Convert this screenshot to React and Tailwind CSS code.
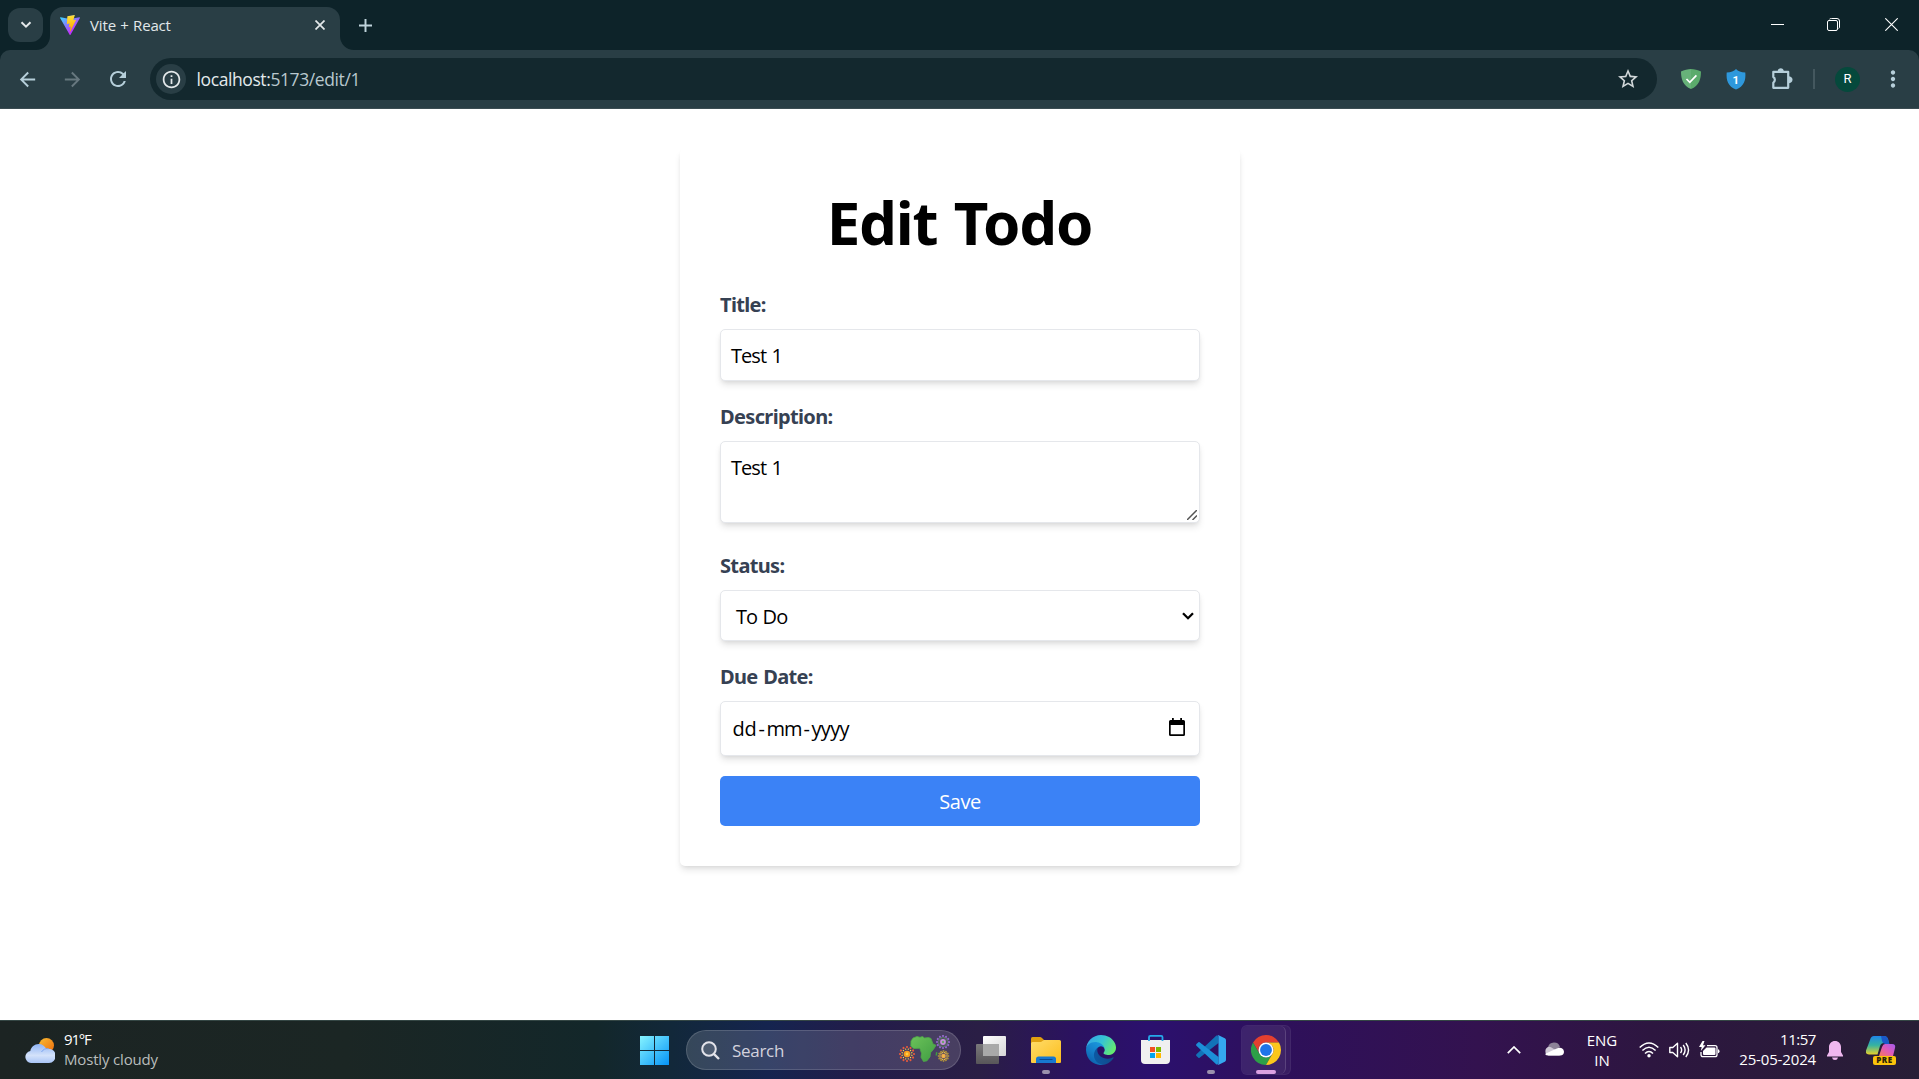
import React from "react";
import { MdArrowBack, MdArrowForward, MdRefresh, MdInfoOutline, MdStarBorder, MdMoreVert } from "react-icons/md";

function ViteLogo() {
  return (
    <svg viewBox="0 0 256 257" className="h-5 w-5">
      <defs>
        <linearGradient id="va" x1="-.8%" x2="57.6%" y1="7.7%" y2="78.4%"><stop offset="0%" stopColor="#41D1FF" /><stop offset="100%" stopColor="#BD34FE" /></linearGradient>
        <linearGradient id="vb" x1="43.4%" x2="50.3%" y1="2.2%" y2="89%"><stop offset="0%" stopColor="#FFEA83" /><stop offset="8.3%" stopColor="#FFDD35" /><stop offset="100%" stopColor="#FFA800" /></linearGradient>
      </defs>
      <path fill="url(#va)" d="M255.153 37.938L134.897 252.976c-2.483 4.44-8.862 4.466-11.382.048L.875 37.958c-2.746-4.814 1.371-10.646 6.827-9.67l120.385 21.517a6.537 6.537 0 0 0 2.322-.004l117.867-21.483c5.438-.991 9.574 4.796 6.877 9.62Z" />
      <path fill="url(#vb)" d="M185.432.063L96.44 17.501a3.268 3.268 0 0 0-2.634 3.014l-5.474 92.456a3.268 3.268 0 0 0 3.997 3.378l24.777-5.718c2.318-.535 4.413 1.507 3.936 3.838l-7.361 36.047c-.495 2.426 1.782 4.5 4.151 3.78l15.304-4.649c2.372-.72 4.652 1.36 4.15 3.788l-11.698 56.621c-.732 3.542 3.979 5.473 5.943 2.437l1.313-2.028l72.516-144.72c1.215-2.423-.88-5.186-3.54-4.672l-25.505 4.922c-2.396.462-4.435-1.77-3.759-4.114l16.646-57.705c.677-2.35-1.37-4.583-3.769-4.113Z" />
    </svg>
  );
}

function TabStrip() {
  return (
    <div className="flex h-[50px] bg-[#0d2329]">
      <div className="ml-2 mt-2 flex h-[34px] w-[35px] items-center justify-center rounded-xl bg-[#293e45]">
        <svg viewBox="0 0 12 8" className="h-2 w-3" fill="none" stroke="#e3e8ea" strokeWidth="2"><path d="M1.5 1.2 6 5.7l4.5-4.5" /></svg>
      </div>
      <div className="relative ml-[7px] mt-[7px] flex h-[43px] w-[290px] items-center rounded-t-[13px] bg-[#293e45] pl-[10px] pb-[7px]">
        <svg viewBox="0 0 14 14" className="absolute -left-[14px] bottom-0 h-[14px] w-[14px]"><path d="M14 0v14H0A14 14 0 0 0 14 0" fill="#293e45" /></svg>
        <svg viewBox="0 0 14 14" className="absolute -right-[14px] bottom-0 h-[14px] w-[14px]"><path d="M0 0v14h14A14 14 0 0 1 0 0" fill="#293e45" /></svg>
        <ViteLogo />
        <span className="ml-[10px] flex-1 text-[15px] leading-5 tracking-[-0.15px] [word-spacing:0.6px] text-[#e2e8ea]">Vite + React</span>
        <svg viewBox="0 0 10 10" className="mr-[15px] h-[10px] w-[10px]" stroke="#e3e8ea" strokeWidth="1.7"><path d="M.5.5l9 9M9.5.5l-9 9" /></svg>
      </div>
      <svg viewBox="0 0 12 12" className="ml-[19px] mt-[18.5px] h-[13px] w-[13px]" stroke="#c0d4dc" strokeWidth="1.8"><path d="M6 0v12M0 6h12" /></svg>
      <div className="flex-1" />
      <div className="flex h-[50px] w-[140px] items-start pt-[18px]">
        <svg viewBox="0 0 13 13" className="-ml-[8px] h-[13px] w-[13px]" stroke="#fff" strokeWidth="1"><path d="M0 6.5h13" /></svg>
        <svg viewBox="0 0 13 13" className="ml-[43px] h-[13px] w-[13px]" fill="none" stroke="#fff" strokeWidth="1"><rect x=".5" y="2.5" width="10" height="10" rx="1.5" /><path d="M2.5 1.2Q3 .5 4.5.5H10Q12.5.5 12.5 3v6q0 1-.8 1.5" /></svg>
        <svg viewBox="0 0 13 13" className="ml-[45px] h-[13px] w-[13px]" stroke="#fff" strokeWidth="1.1"><path d="M.3.3l12.4 12.4M12.7.3.3 12.7" /></svg>
      </div>
    </div>
  );
}

function Toolbar() {
  return (
    <div className="bg-[#0d2329]">
      <div className="flex h-[59px] items-center rounded-t-[10px] border-b border-[#3b4c52] bg-[#293e45]">
        <MdArrowBack className="ml-4 h-[23px] w-[23px] text-[#b6cfda]" />
        <MdArrowForward className="ml-[22px] h-[23px] w-[23px] text-[#67787f]" />
        <MdRefresh className="ml-[22px] h-6 w-6 text-[#b6cfda]" />
        <div className="ml-[20px] flex h-[42px] w-[1507px] items-center rounded-full bg-[#13282e] pl-[6px]">
          <div className="flex h-[30px] w-[30px] items-center justify-center rounded-full bg-[#293e45]"><MdInfoOutline className="h-[21px] w-[21px] text-[#e3e8ea]" /></div>
          <span className="ml-[10.5px] flex-1 text-[17.5px] tracking-[-0.4px] text-[#b9c8ce]"><span className="text-[#e3eaec]">localhost:</span>5173/edit/1</span>
          <MdStarBorder className="mr-[17.5px] h-6 w-6 text-[#d2d8da]" />
        </div>
        <svg viewBox="0 0 20 20" className="ml-[24px] h-5 w-5"><path d="M10 0C7 .2 3 1 0 2.5 0 10 2 17 10 20Z" fill="#67b279" /><path d="M10 0c3 .2 7 1 10 2.5C20 10 18 17 10 20Z" fill="#5bab6c" /><path d="M5.5 10l3.3 3.3 6.6-7" fill="none" stroke="#fff" strokeWidth="1.7" /></svg>
        <svg viewBox="0 0 20 21" className="ml-[25px] h-[21px] w-5"><path d="M10 0C8 2.2 5 3.2.7 3.5 0 11 2 17.500 10 20.500 18 17.500 20 11 19.300 3.500 15 3.200 12 2.200 10 0Z" fill="#2e98dc" /><text x="9.8" y="14.500" textAnchor="middle" fill="#fff" fontSize="11.500" fontWeight="700" fontFamily="Roboto">1</text></svg>
        <svg viewBox="0 0 22 21" className="-mt-[2px] ml-[25px] h-[21px] w-[22px]"><path d="M2.300 3.800h14.900v5.400 5 5.600H2.300v-5.200a3.300 3.300 0 0 0 0-5.600Z" fill="none" stroke="#b6cfda" strokeWidth="2.200" strokeLinejoin="round" /><path d="M18 8.200q3.500.6 3.500 3.500T18 15.200z" fill="#b6cfda" /><path d="M6.500 3.500Q7 .3 9.700.3t3.200 3.200z" fill="#b6cfda" /></svg>
        <div className="ml-[20px] h-5 w-[2px] bg-[#44585f]" />
        <div className="ml-[20px] flex h-[25px] w-[25px] items-center justify-center rounded-full bg-[#05493c] font-[Roboto] text-[13px] text-white">R</div>
        <MdMoreVert className="ml-[20px] h-[26px] w-[26px] text-[#b6cfda]" />
      </div>
    </div>
  );
}

function Field({ label, children, className }) {
  return (
    <div className={className}>
      <div className="mb-[10px] h-[30px] pl-[0.5px] pt-px font-['Noto_Sans'] text-[20px] font-bold leading-[30px] tracking-[-0.65px] text-gray-700 [word-spacing:1px]">{label}</div>
      {children}
    </div>
  );
}

const box = "flex w-full rounded-[5px] border border-[#e5e7eb] bg-white text-[20px] leading-[30px] tracking-[-0.95px] [word-spacing:1.2px] text-black shadow-[0_5px_7.5px_-1px_rgba(0,0,0,0.1),0_2.5px_5px_-2.5px_rgba(0,0,0,0.1)]";

function EditForm() {
  return (
    <div className="flex h-[911px] items-start justify-center bg-white pt-10">
      <div className="h-[717px] w-[560px] rounded-[5px] px-10 pt-[42.5px] shadow-[0_5px_7.5px_-1px_rgba(0,0,0,0.1),0_2.5px_5px_-2.5px_rgba(0,0,0,0.1)]">
        <h1 className="mb-[37.5px] text-center font-['Noto_Sans'] text-[60px] font-bold leading-[61px] h-[60px] tracking-[-1.2px] [word-spacing:2px] text-black">Edit Todo</h1>
        <Field label="Title:" className="h-28"><div className={box + " h-[52px] items-center pt-[2px] px-[10.5px]"}>Test 1</div></Field>
        <Field label="Description:" className="h-[149px]">
          <div className={box + " relative h-[82px] px-[10.5px] pt-[11px]"}>Test 1
            <svg viewBox="0 0 10 10" className="absolute bottom-[2px] right-[2px] h-[10px] w-[10px]" stroke="#555" strokeWidth="1.5"><path d="M0 10 10 0M5.500 10 10 5.500" /></svg>
          </div>
        </Field>
        <Field label="Status:" className="h-[111px]">
          <div className={box + " h-[51px] items-center justify-between pl-[15.5px] pr-[5px]"}><span className="pt-[2px]">To Do</span>
            <svg viewBox="0 0 12 8" className="h-2 w-3" fill="none" stroke="#000" strokeWidth="2.300"><path d="M1 1.200 6 6.200l5-5" /></svg>
          </div>
        </Field>
        <Field label="Due Date:" className="h-[115px]">
          <div className={box + " h-[55px] items-center pl-[12px] pr-[14px]"}>
            <span className="w-[26px] tracking-[-0.300px]">dd</span><span className="w-[8px]">-</span><span className="w-[37px] tracking-[-1px]">mm</span><span className="w-[8px]">-</span><span className="flex-1 tracking-[-0.700px]">yyyy</span>
            <svg viewBox="0 0 16 18" className="-mt-[3px] h-[18px] w-4"><path d="M3 0h1.800v2h6.400V0H13v2h1.500Q16 2 16 3.500v13q0 1.500-1.500 1.500h-13Q0 18 0 16.500v-13Q0 2 1.500 2H3Zm-1.300 7v9.300h12.600V7Z" fillRule="evenodd" /></svg>
          </div>
        </Field>
        <button className="h-[50px] w-full rounded-[5px] bg-[#3b82f6] pl-px pt-[2px] text-[20px] leading-[30px] tracking-[-0.500px] text-white">Save</button>
      </div>
    </div>
  );
}

function WeatherIcon() {
  return (
    <svg viewBox="0 0 30 25" className="h-[25px] w-[30px]">
      <defs>
        <linearGradient id="sun" x1="0" x2="1" y1="0" y2="1"><stop stopColor="#f9bd32" /><stop offset="1" stopColor="#ec6a0c" /></linearGradient>
        <linearGradient id="cl" x1="0" x2="0" y1="0" y2="1"><stop stopColor="#8fb4f5" /><stop offset=".6" stopColor="#d4e2fa" /><stop offset="1" stopColor="#a9c5f6" /></linearGradient>
      </defs>
      <circle cx="21.500" cy="7.500" r="7.500" fill="url(#sun)" />
      <path d="M6 25a6 6 0 0 1-.7-11.900C6 9 9.500 6 13.700 6c3.600 0 6.200 2 7.600 5a7 7 0 0 1 2-.3A6.900 7 0 0 1 24 25Z" fill="url(#cl)" />
      <path d="M16.500 14a7 7 0 0 1 7-3.300" fill="none" stroke="#7da6f0" strokeWidth="1" />
    </svg>
  );
}

const rays = [0, 30, 60, 90, 120, 150, 180, 210, 240, 270, 300, 330];
function Burst({ x, y, r, outer, mid, core }) {
  return (
    <g transform={`translate(${x} ${y})`}>
      {rays.map((a) => <circle key={a} cx={r} cy="0" r="1.100" fill={outer} transform={`rotate(${a})`} />)}
      {rays.map((a) => <circle key={a} cx={r * 0.72} cy="0" r=".7" fill={mid} transform={`rotate(${a + 15})`} />)}
      <circle r={r * 0.48} fill={core} />
      <circle r={r * 0.2} fill={mid} />
    </g>
  );
}

function SearchPill() {
  return (
    <div className="flex h-10 w-[275px] items-center rounded-full border border-white/15 bg-white/15 pl-[14px]">
      <svg viewBox="0 0 19 19" className="h-[19px] w-[19px]" fill="none" stroke="#e3e3ea" strokeWidth="2"><circle cx="8" cy="8" r="6.800" fill="#fff" fillOpacity=".12" /><path d="M12.800 12.800 18 18" strokeWidth="2.400" /></svg>
      <span className="ml-3 flex-1 pt-px text-[17px] tracking-[-0.300px] text-[#d3d2dd]">Search</span>
      <svg viewBox="0 0 52 30" className="mr-[10px] h-[30px] w-[52px]">
        <defs><linearGradient id="af" x1="0" x2="1" y1="0" y2="1"><stop stopColor="#6cc25a" /><stop offset="1" stopColor="#3f9d42" /></linearGradient></defs>
        <path d="M13 6l2-3 4-1.500 3 .8 2.500-.8 2 1.500 4-.5 2.500 1 2 5.500 3 1.300-2.500 4-3 3.500-.5 4-3 4-3.500.7-2.500-4.200.5-4-1.700-5-6 .2-3-2.500Z" fill="url(#af)" stroke="#4ea848" strokeWidth=".8" strokeLinejoin="round" />
        <path d="M38 17l1.500.5-.5 3-1.500 0Z" fill="#3f9d42" />
        <Burst x={9} y={19} r={7} outer="#e85a3c" mid="#f8d24a" core="#f79a1c" />
        <Burst x={45} y={7} r={6} outer="#9068c8" mid="#6aa868" core="#c793dd" />
        <Burst x={45.500} y={21} r={4.800} outer="#a88a3e" mid="#e8bf4a" core="#f0a848" />
      </svg>
    </div>
  );
}

function EdgeIcon() {
  return (
    <svg viewBox="0 0 256 256" className="h-[30px] w-[30px]">
      <defs>
        <linearGradient id="e1" x1="0" x2="1"><stop stopColor="#0c59a4" /><stop offset="1" stopColor="#114a8b" /></linearGradient>
        <linearGradient id="e2" x1=".8" x2=".2" y1="0" y2="1"><stop stopColor="#1b9de2" /><stop offset=".5" stopColor="#1580ca" /><stop offset="1" stopColor="#0c5ba8" /></linearGradient>
        <linearGradient id="e3" x1="0" x2="1" y1=".2" y2=".6"><stop stopColor="#35a3e8" /><stop offset=".5" stopColor="#36c3d4" /><stop offset="1" stopColor="#66eb6e" /></linearGradient>
      </defs>
      <path fill="url(#e1)" d="M231 190.500c-3.400 1.800-6.900 3.400-10.500 4.700a101.500 101.500 0 0 1-35.900 6.500c-47.300 0-88.500-32.500-88.500-74.300 0-11.700 6.400-22 15.400-27.400C68.700 101.800 57.700 146.400 57.700 172.500c0 73.800 68 81.300 82.700 81.300 7.900 0 19.800-2.300 27-4.600l1.300-.4a128.300 128.300 0 0 0 66.600-52.800 4 4 0 0 0-4.300-5.500z" />
      <path fill="url(#e2)" d="M105.700 241.400a79.200 79.200 0 0 1-22.700-21.300A80.700 80.700 0 0 1 112.500 100c3.100-1.500 8.500-4.100 15.600-4a32.400 32.400 0 0 1 25.700 13 31.900 31.900 0 0 1 6.300 18.700c0-.2 24.500-79.600-80-79.600C36.200 48.100 0 89.800 0 126.400c-.2 19.300 4 38.500 12.200 56a128 128 0 0 0 156.400 67 75.500 75.500 0 0 1-62.800-8z" />
      <path fill="url(#e3)" d="M152.300 148.900c-.8 1-3.300 2.500-3.300 5.700 0 2.600 1.700 5.100 4.700 7.300 14.400 10 41.500 8.700 41.600 8.700 10.700 0 21.100-2.900 30.300-8.300A61.400 61.400 0 0 0 256 109.400c.3-22.400-8-37.300-11.300-43.900C223.500 23.900 177.700 0 128 0 58 0 1 56.200 0 126.200c.5-36.500 36.800-66 80-66 3.500 0 23.500.3 42 10.100 16.300 8.600 24.900 18.900 30.800 29.200 6.200 10.700 7.300 24.100 7.300 29.500 0 5.300-2.700 13.300-7.800 19.900z" />
    </svg>
  );
}

function AppIcons() {
  return (
    <>
      <svg viewBox="0 0 30 28" className="ml-[15px] h-7 w-[30px]">
        <defs><linearGradient id="tv" x1="0" y1="0" x2="1" y2="1"><stop stopColor="#fff" /><stop offset="1" stopColor="#d6d6d6" /></linearGradient><linearGradient id="tw" x1="0" y1="0" x2="0" y2="1"><stop stopColor="#7a787b" /><stop offset="1" stopColor="#585659" /></linearGradient></defs>
        <rect y="8" width="23" height="20" rx="1" fill="url(#tw)" /><rect x="7" width="23" height="20" rx="1" fill="url(#tv)" /><path d="M7 8h16v12H7z" fill="#a9a9a9" />
      </svg>
      <svg viewBox="0 0 30 27" className="ml-[25px] h-[27px] w-[30px]">
        <defs><linearGradient id="fo" x1="0" y1="0" x2="1" y2="1"><stop stopColor="#ffdc6a" /><stop offset="1" stopColor="#fcbd1b" /></linearGradient></defs>
        <path d="M0 1.500Q0 0 1.500 0H9q1 0 2 1l2.500 2.500V8H0Z" fill="#e0a010" /><path d="M0 6.500Q0 5 1.500 5H10l3-2h15.500Q30 3 30 4.500v20.500q0 1-1 1H1q-1 0-1-1Z" fill="url(#fo)" /><path d="M5 26v-4q0-2.500 2.500-2.500h15q2.500 0 2.500 2.500v4Z" fill="#1778d0" /><path d="M8.500 22.500h13" stroke="#0b4b91" />
      </svg>
      <div className="ml-[25px]"><EdgeIcon /></div>
      <svg viewBox="0 0 30 30" className="ml-[25px] h-[30px] w-[30px]">
        <path d="M0 5h29v20q0 4-4 4H4q-4 0-4-4Z" fill="#f0f0f0" /><path d="M8 6V2.200q0-1.300 1.300-1.300h10.900q1.300 0 1.300 1.300V6" fill="none" stroke="#25a9ea" strokeWidth="1.800" />
        <path d="M9 12h5v5H9z" fill="#f25022" /><path d="M15 12h5v5h-5z" fill="#7fba00" /><path d="M9 18h5v5H9z" fill="#00a4ef" /><path d="M15 18h5v5h-5z" fill="#ffb900" />
      </svg>
      <svg viewBox="0 0 100 100" className="ml-[25px] h-[30px] w-[30px]">
        <path d="M68 2 75 5V27L12 76Q10 77.500 8 76L1.500 70Q-1 67 1.500 64Z" fill="#1272b8" /><path d="M68 98 75 95V73L12 24Q10 22.500 8 24L1.500 30Q-1 33 1.500 36Z" fill="#1c8fd8" /><path d="M68 2Q71-1 75.500 1L96 11q4 2 4 6.500v65q0 4.500-4 6.500L75.500 99Q71 101 68 98 75 102 75 94V6Q75-2 68 2Z" fill="#35a8f0" />
      </svg>
    </>
  );
}

function ChromeTile() {
  return (
    <div className="ml-[15px] flex h-[50px] w-[50px] rounded-md border border-white/5 bg-white/5">
      <div className="flex h-[48px] w-[44px] items-center justify-center rounded-md border-r border-white/15 bg-white/[0.03]">
        <svg viewBox="0 0 48 48" className="ml-[4px] h-[30px] w-[30px]">
          <path fill="#e3402f" d="M24 12L44.780 12A24 24 0 0 0 3.215 12L13.610 30A12 12 0 0 1 24 12Z" />
          <path fill="#2d9f48" d="M13.610 30L3.215 12A24 24 0 0 0 24 48L34.390 30A12 12 0 0 1 13.610 30Z" />
          <path fill="#fcc71c" d="M34.390 30L24 48A24 24 0 0 0 44.780 12L24 12A12 12 0 0 1 34.390 30Z" />
          <circle cx="24" cy="24" r="12" fill="#fff" /><circle cx="24" cy="24" r="9.500" fill="#1f74e8" />
        </svg>
      </div>
    </div>
  );
}

function Tray() {
  return (
    <>
      <svg viewBox="0 0 14 8" className="h-2 w-[14px]" fill="none" stroke="#fff" strokeWidth="1.700"><path d="M.8 7.200 7 1l6.200 6.200" /></svg>
      <svg viewBox="0 0 20 14" className="-mt-[2px] ml-[23px] h-[14px] w-5"><path d="M4 5.500A6.200 6.200 0 0 1 16 5L10 9Z" fill="#8d8398" /><path d="M4.500 13.500A4.500 4.500 0 0 1 5 4.800q2 .2 4 1.700l9 5q-1 2-3 2Z" fill="#cfc9d5" /><path d="M1 12Q8 8.500 14 6q5-1 6 3.500 0 4-4 4H4.500Q2 13.500 1 12Z" fill="#fff" /></svg>
      <div className="ml-[18px] w-[40px] text-center text-[15px] leading-5 text-white">ENG<br />IN</div>
      <svg viewBox="0 0 20 16" className="ml-[17px] h-4 w-5" fill="none" stroke="#fff" strokeWidth="1.500"><path d="M.7 5.500Q10-3.500 19.300 5.500M3.400 8.500q6.600-6.500 13.200 0M6 11.500q4-4 8 0" /><circle cx="10" cy="13.800" r="1.700" fill="#fff" stroke="none" /></svg>
      <svg viewBox="0 0 21 16" className="ml-[10px] h-4 w-[21px]" fill="none" stroke="#fff" strokeWidth="1.400"><path d="M.8 5.500h3L8.500 1.300v13.400L3.800 10.500h-3Z" strokeLinejoin="round" /><path d="M11.500 5q2.300 3 0 6M14.200 3q3.800 5 0 10M16.800 1q5.500 7 0 14" /></svg>
      <svg viewBox="0 0 21 17" className="-mt-[2px] ml-[9px] h-[17px] w-[21px]"><path d="M8 4.700h8q2 0 2 2v7q0 2-2 2H4q-2 0-2-2V11" fill="none" stroke="#fff" strokeWidth="1.300" /><path d="M7.500 6.500h8q1 0 1 1v5.500q0 1-1 1H5q-1 0-1-1V10Z" fill="#fff" /><path d="M19 8.300q1.500 0 1.500 2t-1.500 2Z" fill="#fff" /><path d="M3.500 0 0 6h2.700L1.800 10 6.500 4.200H4L5.500 0Z" fill="#fff" /></svg>
      <div className="ml-[16px] w-20 pb-[2px] text-right text-[15px] leading-5 text-white"><div className="tracking-[-0.450px]">11:57</div><div className="tracking-[-0.150px]">25-05-2024</div></div>
      <svg viewBox="0 0 16 19" className="ml-[11px] h-[19px] w-4"><path d="M8 0C11.500 0 14 2.700 14 6v5l2 3.500V15.500H0V14.500L2 11V6C2 2.700 4.500 0 8 0Z" fill="#f0b8f0" /><path d="M5 16.500h6Q10.500 19 8 19T5 16.500Z" fill="#f0b8f0" /></svg>
      <div className="relative ml-[23px] h-[29px] w-[30px]">
        <svg viewBox="0 0 30 29" className="h-[29px] w-[30px]">
          <defs>
            <linearGradient id="c1" x1="0" y1="0" x2="0" y2="1"><stop stopColor="#1f86e8" /><stop offset=".5" stopColor="#35b3a0" /><stop offset="1" stopColor="#e8d02a" /></linearGradient>
            <linearGradient id="c2" x1="0" y1="1" x2="1" y2="0"><stop stopColor="#f5785a" /><stop offset=".5" stopColor="#e05ab8" /><stop offset="1" stopColor="#a35cf0" /></linearGradient>
          </defs>
          <path d="M8 0h10q3 0 4 3l1 4h-5q-3 0-4 3l-2.500 8.500H3q-4 0-3-4L4 4q1-4 4-4Z" fill="url(#c1)" /><path d="M15 0h3q3 0 4 3l1.500 5H19q-2 0-3-3Z" fill="#1a58c8" />
          <path d="M19 8h7q4 0 3 4l-2 8H13l3-9q1-3 3-3Z" fill="url(#c2)" />
        </svg>
        <div className="absolute bottom-0 right-0 flex h-[9px] w-[23px] items-center justify-center rounded-[2px] bg-[#fcc30b] text-[8px] font-extrabold leading-none tracking-[0.500px] text-[#2a2208]">PRE</div>
      </div>
    </>
  );
}

function Taskbar() {
  return (
    <div className="flex h-[59px] items-center border-t border-[#344644] bg-[linear-gradient(90deg,#1c2423_0%,#1b2624_18%,#13272a_31%,#12283a_35%,#15244f_40%,#231c4a_45%,#2a1e45_51%,#2b1260_56%,#2b106e_60%,#2e105a_67%,#33124f_77%,#2d1640_86%,#281e36_100%)]">
      <div className="flex w-[640px] items-center pl-[24.5px]">
        <WeatherIcon />
        <div className="ml-[9.5px] pb-[2px] text-[15px] leading-5"><div className="tracking-[-1.200px] text-white">91°F</div><div className="tracking-[-0.170px] text-[#b9bdbc]">Mostly cloudy</div></div>
      </div>
      <svg viewBox="0 0 29 29" className="mr-[17px] h-[29px] w-[29px]"><defs><linearGradient id="win" x1="0" y1="0" x2="29" y2="29" gradientUnits="userSpaceOnUse"><stop stopColor="#86f4ff" /><stop offset="1" stopColor="#0593f7" /></linearGradient></defs><path d="M0 0h14v14H0zM15 0h14v14H15zM0 15h14v14H0zM15 15h14v14H15z" fill="url(#win)" /></svg>
      <SearchPill />
      <div className="relative flex h-[58px] items-center">
        <AppIcons />
        <ChromeTile />
        <div className="absolute bottom-[5px] left-[81px] h-1 w-2 rounded-full bg-[#9a90ad]" />
        <div className="absolute bottom-[5px] left-[246px] h-1 w-2 rounded-full bg-[#9a90ad]" />
        <div className="absolute bottom-[5px] left-[295px] h-1 w-5 rounded-full bg-[#dba0e2]" />
      </div>
      <div className="ml-auto flex items-center pr-[23px]"><Tray /></div>
    </div>
  );
}

export default function App() {
  return (
    <div className="h-[1079px] w-[1919px] overflow-hidden bg-white font-['Open_Sans',sans-serif]">
      <TabStrip />
      <Toolbar />
      <EditForm />
      <Taskbar />
    </div>
  );
}
